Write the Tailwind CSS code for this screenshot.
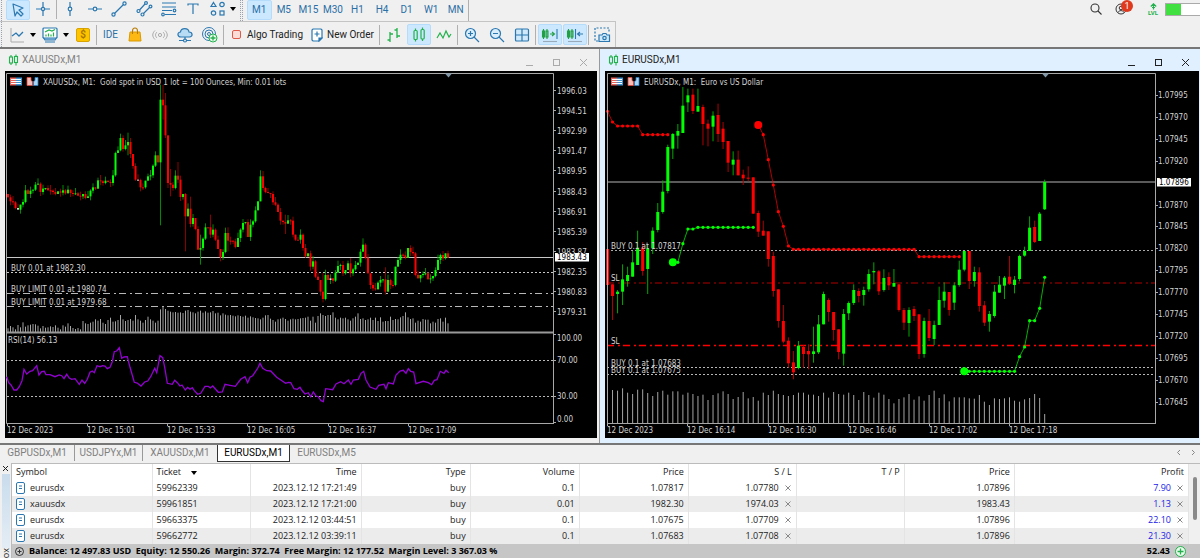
<!DOCTYPE html>
<html lang="en">
<head>
    <meta charset="UTF-8">
    <meta name="viewport" content="width=device-width, initial-scale=1.0">
    <script src="https://cdn.jsdelivr.net/npm/@tailwindcss/browser@4"></script>
    <title>Trading Terminal</title>
</head>
<body class="bg-[#f0f0f0] font-['Open_Sans','Noto_Sans',sans-serif] text-[9px] leading-4 text-[#222]">
<div class="flex min-h-screen w-full flex-col overflow-hidden">

    <!-- toolbars -->
    <header class="flex justify-between border-b-2 border-[#777] font-[Roboto,sans-serif]">
        <div>
            <div class="flex h-[22px] w-[616px] items-start border-b border-[#c4c4c4]">
                <div class="ml-px mr-1 h-[21px] border-l border-dotted border-gray-400"></div>
                <button aria-label="Cursor" class="flex h-5 w-6 items-center justify-center rounded-[2px] border border-[#b5dcfb] bg-[#cce8ff]">
                    <svg class="size-[18px]" viewBox="0 0 18 18" fill="none" stroke="#2b78b0" stroke-width="1.2" stroke-linejoin="round"><path d="M4 3l10 4-4 2 4 4-2 2-4-4-2 4z"/></svg>
                </button>
                <button aria-label="Crosshair" class="flex h-[18px] w-[25px] items-center justify-center">
                    <svg class="size-[18px]" viewBox="0 0 18 18" fill="none" stroke="#2b78b0" stroke-width="1.2"><path d="M9 2v5M9 11v5M2 9h5M11 9h5"/><circle cx="9" cy="9" r="1.6"/></svg>
                </button>
                <div class="ml-px mr-px h-[19px] border-l border-[#b0b0b0]"></div>
                <div class="grid h-[18px] w-[172px] grid-cols-7 justify-items-center">
                    <button aria-label="Vertical line"><svg class="size-[18px]" viewBox="0 0 18 18" fill="none" stroke="#2b78b0" stroke-width="1.2"><path d="M9 2v5M9 11v5"/><circle cx="9" cy="9" r="1.8"/></svg></button>
                    <button aria-label="Horizontal line"><svg class="size-[18px]" viewBox="0 0 18 18" fill="none" stroke="#2b78b0" stroke-width="1.2"><path d="M2 9h5M11 9h5"/><circle cx="9" cy="9" r="1.8"/></svg></button>
                    <button aria-label="Trendline"><svg class="size-[18px]" viewBox="0 0 18 18" fill="none" stroke="#2b78b0" stroke-width="1.2"><path d="M4.500 13.500l9-9"/><circle cx="3.500" cy="14.500" r="1.600"/><circle cx="14.500" cy="3.500" r="1.600"/></svg></button>
                    <button aria-label="Channel"><svg class="size-[18px]" viewBox="0 0 18 18" fill="none" stroke="#2b78b0" stroke-width="1.2"><path d="M4.500 10l5.500-6M8.500 13.500l6-6"/><circle cx="3.500" cy="11" r="1.500"/><circle cx="7.500" cy="14.500" r="1.500"/><circle cx="11" cy="3" r="1.400"/><circle cx="15.500" cy="6.500" r="1.400"/></svg></button>
                    <button aria-label="Fibonacci"><svg class="size-[18px]" viewBox="0 0 18 18" fill="none" stroke="#2b78b0" stroke-width="1.2"><path d="M2 3h14M2 7h14M2 10.500h10M5 14.500h11"/><circle cx="3" cy="14.500" r="1.300"/><circle cx="14.500" cy="10.500" r="1.300"/></svg></button>
                    <button aria-label="Text"><svg class="size-[18px]" viewBox="0 0 18 18" fill="none" stroke="#2b78b0" stroke-width="1.200"><path d="M4 5.500V4h10v1.500M9 4v10"/></svg></button>
                    <button aria-label="Shapes"><svg class="size-[18px]" viewBox="0 0 18 18" fill="none" stroke="#2b78b0" stroke-width="1.200"><path d="M4.500 2.500l2.500 4H2z"/><circle cx="13" cy="4.500" r="2.200"/><circle cx="4.500" cy="13" r="2.200"/><rect x="11" y="11" width="4" height="4"/></svg></button>
                </div>
                <svg class="mt-[7px] h-1 w-[6px]" viewBox="0 0 6 4"><path d="M0 0h6L3 4z"/></svg>
                <div class="ml-1 mr-1 flex h-[21px] w-[3px] border-x border-dotted border-gray-400"></div>
                <div class="grid h-5 w-[221px] grid-cols-9 text-center text-[10px] leading-5 text-[#2b6fa5]">
                    <button class="rounded-[2px] border border-[#b5dcfb] bg-[#cce8ff] leading-[18px]">M1</button>
                    <button>M5</button>
                    <button>M15</button>
                    <button>M30</button>
                    <button>H1</button>
                    <button>H4</button>
                    <button>D1</button>
                    <button>W1</button>
                    <button>MN</button>
                </div>
                <div class="h-[21px] border-l border-[#b0b0b0]"></div>
            </div>

            <div class="flex h-[25px] w-[616px] items-center border-r border-[#c4c4c4] text-[10px]">
                <div class="ml-px h-full border-l border-dotted border-gray-400"></div>
                <button aria-label="Chart type" class="ml-[6px] flex items-center gap-1">
                    <svg class="size-[18px]" viewBox="0 0 18 18" fill="none"><path d="M3 2v14h13" stroke="#aaa"/><path d="M4 10l4-3 3 3 4-4" stroke="#2b78b0" stroke-width="1.300"/></svg>
                    <svg class="h-1 w-[6px]" viewBox="0 0 6 4"><path d="M0 0h6L3 4z"/></svg>
                </button>
                <button aria-label="Template" class="ml-[5px] flex items-center gap-1">
                    <svg class="size-[18px]" viewBox="0 0 18 18" fill="#fff" stroke="#2b78b0" stroke-width="1.200"><path d="M4 16h10M2 11l2 3h10l2-3" fill="#9cc8ea"/><rect x="2" y="2" width="14" height="10" rx="1"/><path d="M4 6l4-2 3 1 3-1.500" fill="none" stroke="#22b14c"/><path d="M5 10.500v-2M7.500 10.500v-3M10 10.500v-2M12.500 10.500v-4" stroke="#22b14c"/></svg>
                    <svg class="h-1 w-[6px]" viewBox="0 0 6 4"><path d="M0 0h6L3 4z"/></svg>
                </button>
                <button aria-label="Market" class="ml-[7px] flex size-[14px] items-center justify-center rounded-[2px] border border-[#d9a300] bg-[#fdc400] font-semibold leading-none text-[#a87400]">$</button>
                <div class="ml-[6px] mr-px h-5 border-l border-[#b0b0b0]"></div>
                <div class="grid w-[124px] grid-cols-5 place-items-center text-[#2b6fa5]">
                    <button>IDE</button>
                    <button aria-label="Shop"><svg class="size-[18px]" viewBox="0 0 18 18"><path d="M4 6h10l1 9H3z" fill="#fdb813" stroke="#d99a00"/><path d="M6.500 8V5c0-4 5-4 5 0v3" fill="none" stroke="#b97c00" stroke-width="1.100"/></svg></button>
                    <button aria-label="Signals"><svg class="size-[18px]" viewBox="0 0 18 18" fill="none" stroke="#aaa"><circle cx="9" cy="9" r="1.600"/><path d="M6 6c-2 2-2 4 0 6M12 6c2 2 2 4 0 6M4 4.500c-3 3-3 6 0 9M14 4.500c3 3 3 6 0 9"/></svg></button>
                    <button aria-label="VPS"><svg class="size-[18px]" viewBox="0 0 18 18" fill="none" stroke="#2b78b0" stroke-width="1.200"><path d="M5 11c-4 0-4-5-.5-5 .5-4.500 8-4.500 8.500 0 4 0 4 5 .5 5z" fill="#b9dcf5"/><path d="M9 11v3M3 14.500h4M11 14.500h4"/><circle cx="9" cy="14.500" r="1.500"/></svg></button>
                    <button aria-label="Copy trading"><svg class="size-[18px]" viewBox="0 0 18 18" fill="none" stroke="#2b78b0"><circle cx="8" cy="8" r="6.500"/><circle cx="8" cy="8" r="4"/><circle cx="8" cy="8" r="1.500"/><circle cx="12" cy="12" r="4" fill="#e9f9ec" stroke="#22b14c"/><path d="M12 9.500v5M9.500 12h5" stroke="#22b14c" stroke-width="1.300"/></svg></button>
                </div>
                <div class="ml-px h-5 border-l border-[#b0b0b0]"></div>
                <button class="ml-2 flex h-6 w-[71px] items-center gap-[6px] whitespace-nowrap">
                    <span class="size-[9px] shrink-0 rounded-[2px] border border-[#e05a4a] bg-[#fbdcd7]"></span>Algo Trading
                </button>
                <button class="ml-2 flex h-6 w-[67px] items-center gap-1 whitespace-nowrap">
                    <svg class="h-[14px] w-3 shrink-0" viewBox="0 0 12 14" fill="#fff" stroke="#2b78b0" stroke-width="1.200"><path d="M2 1h8l1 1v8l-3 3H2l-1-1V2z"/><path d="M8 13v-3h3z" fill="#2b78b0"/><path d="M6 3.500v5M3.500 6h5"/></svg>New Order
                </button>
                <div class="ml-px h-5 border-l border-[#b0b0b0]"></div>
                <div class="ml-px grid w-[75px] grid-cols-3 place-items-center">
                    <button aria-label="Bars"><svg class="size-[18px]" viewBox="0 0 18 18" fill="none" stroke="#22b14c" stroke-width="1.300"><path d="M5 6v10M2.500 14H5M5 8h3M12 2v10M9.500 4H12M12 10h3"/></svg></button>
                    <button aria-label="Candles" class="flex h-[21px] w-6 items-center justify-center rounded-[2px] border border-[#b5dcfb] bg-[#cce8ff]"><svg class="size-[18px]" viewBox="0 0 18 18" fill="none" stroke="#22b14c" stroke-width="1.200"><path d="M5.500 2.500v2M5.500 13.500v2M12.500 1.500v2M12.500 13v2"/><rect x="4" y="4.500" width="3.200" height="9" rx="1"/><rect x="11" y="3.500" width="3.200" height="9.500" rx="1"/></svg></button>
                    <button aria-label="Line"><svg class="size-[18px]" viewBox="0 0 18 18" fill="none" stroke="#22b14c" stroke-width="1.200"><path d="M2 12l3-5 3 5 3-7 3 6 2-3"/></svg></button>
                </div>
                <div class="ml-px h-5 border-l border-[#b0b0b0]"></div>
                <div class="ml-[2px] grid w-[74px] grid-cols-3 place-items-center">
                    <button aria-label="Zoom in"><svg class="size-[18px]" viewBox="0 0 18 18" fill="none" stroke="#2b78b0" stroke-width="1.200"><circle cx="7.500" cy="7.500" r="5" fill="#d9edfb"/><path d="M11 11l5 5M7.500 5v5M5 7.500h5"/></svg></button>
                    <button aria-label="Zoom out"><svg class="size-[18px]" viewBox="0 0 18 18" fill="none" stroke="#2b78b0" stroke-width="1.200"><circle cx="7.500" cy="7.500" r="5" fill="#d9edfb"/><path d="M11 11l5 5M5 7.500h5"/></svg></button>
                    <button aria-label="Tile windows"><svg class="size-[18px]" viewBox="0 0 18 18" fill="#cfe8fa" stroke="#2b78b0" stroke-width="1.200"><rect x="2.500" y="3" width="13" height="12" rx="1"/><path d="M9 3v12M2.500 9h13"/></svg></button>
                </div>
                <div class="ml-px mr-[2px] h-5 border-l border-[#b0b0b0]"></div>
                <div class="flex gap-px">
                    <button aria-label="Shift end" class="flex h-[21px] w-6 items-center justify-center rounded-[2px] border border-[#b5dcfb] bg-[#cce8ff]"><svg class="size-[18px]" viewBox="0 0 18 18" fill="none" stroke="#22a045" stroke-width="1.100"><path d="M2.500 3v10M6 3v10M9 8h4M11 6l2.500 2L11 10"/><rect x="1.500" y="5" width="2" height="6"/><rect x="5" y="5" width="2" height="6"/><path d="M16 3v10" stroke="#2b78b0"/><path d="M2 15.500h14" stroke="#9ab"/></svg></button>
                    <button aria-label="Auto scroll" class="flex h-[21px] w-6 items-center justify-center rounded-[2px] border border-[#b5dcfb] bg-[#cce8ff]"><svg class="size-[18px]" viewBox="0 0 18 18" fill="none" stroke="#22a045" stroke-width="1.100"><path d="M2.500 3v10M6 3v10"/><rect x="1.500" y="5" width="2" height="6"/><rect x="5" y="5" width="2" height="6"/><path d="M9.500 3v10M12 8h5M14 6l-2.500 2 2.500 2" stroke="#2b78b0"/><path d="M2 15.500h14" stroke="#9ab"/></svg></button>
                </div>
                <div class="ml-px mr-1 h-5 border-l border-[#b0b0b0]"></div>
                <button aria-label="Screenshot"><svg class="size-[18px]" viewBox="0 0 18 18" fill="none" stroke="#2b78b0" stroke-width="1.200"><path d="M5 15H2V2h14v5" stroke-dasharray="2 1.500"/><path d="M6 9h3l1-1.500h3L14 9h2.500v6.500H6z" fill="#cfe8fa"/><circle cx="11.500" cy="12" r="1.700"/></svg></button>
            </div>
        </div>

        <div class="flex h-[22px] items-start pt-[3px]">
            <button aria-label="Search"><svg class="h-3 w-3" viewBox="0 0 12 12" fill="none" stroke="#333" stroke-width="1.100"><circle cx="5" cy="5" r="4"/><path d="M8 8l3.500 3.500"/></svg></button>
            <button aria-label="Notifications" class="relative ml-[13px]">
                <svg class="size-3" viewBox="0 0 12 12" fill="none" stroke="#333"><circle cx="6" cy="6" r="5"/><circle cx="6" cy="5" r="1.800"/><path d="M3 9.500c1-2.500 5-2.500 6 0"/></svg>
                <span class="absolute -top-[3px] left-[6px] flex size-3 items-center justify-center rounded-full bg-[#e03a1e] text-[9px] leading-none text-white">1</span>
            </button>
            <div class="ml-5 flex w-3 flex-col items-center text-[#22b14c]">
                <svg class="h-[7px] w-[7px]" viewBox="0 0 7 7" fill="none" stroke="currentColor" stroke-width="1.200"><path d="M3.500 6.500v-5M.8 3.500L3.500.8l2.700 2.700M2 4.500h3"/></svg>
                <span class="text-[6px] font-bold leading-[6px]">LVL</span>
            </div>
            <div class="ml-[6px] flex h-[13px] w-[35px] border border-r-0 border-[#aaa] bg-white"><div class="w-[15px] bg-[#3fe03f]"></div></div>
        </div>
    </header>

    <!-- chart windows -->
    <main class="flex">
        <section class="w-1/2 border-r border-[#999] bg-[#f0f0f0] pb-[5px] pl-[5px] pr-[2px]">
            <div class="flex h-[22px] items-center font-[Roboto,sans-serif] text-[10px] text-[#808080]">
                <svg class="mx-[3px] h-3 w-[11px]" viewBox="0 0 11 12" fill="none" stroke="#22b14c" stroke-width="1.100"><path d="M3 1v2M3 9v2M8 .500v2M8 8.500v3"/><rect x="1.500" y="3" width="3" height="6"/><rect x="6.500" y="2.500" width="3" height="6"/></svg>
                <h2>XAUUSDx,M1</h2>
                <div class="ml-auto mr-[9px] flex gap-[18px] pt-1">
                    <button aria-label="Minimize"><svg class="size-[9px]" viewBox="0 0 9 9" stroke="#aaa"><path d="M1 7.500h7"/></svg></button>
                    <button aria-label="Maximize"><svg class="size-[9px]" viewBox="0 0 9 9" fill="none" stroke="#aaa"><rect x="1.500" y="1.500" width="6" height="6"/></svg></button>
                    <button aria-label="Close"><svg class="size-[9px]" viewBox="0 0 9 9" stroke="#aaa"><path d="M1 1l7 7M8 1L1 8"/></svg></button>
                </div>
            </div>
            <svg id="chart-xau" class="h-auto w-full bg-black font-['DejaVu_Sans_Condensed','DejaVu_Sans',sans-serif] text-[8px]" viewBox="5 71 592 367" fill="#d4d4d4"></svg>
        </section>
        <section class="w-1/2 bg-[#e1f0fe] pb-[5px] pl-[5px] pr-px">
            <div class="flex h-[22px] items-center font-[Roboto,sans-serif] text-[10px] text-[#222]">
                <svg class="mx-[3px] h-3 w-[11px]" viewBox="0 0 11 12" fill="none" stroke="#22b14c" stroke-width="1.100"><path d="M3 1v2M3 9v2M8 .500v2M8 8.500v3"/><rect x="1.500" y="3" width="3" height="6"/><rect x="6.500" y="2.500" width="3" height="6"/></svg>
                <h2>EURUSDx,M1</h2>
                <div class="ml-auto mr-[9px] flex gap-[18px] pt-1">
                    <button aria-label="Minimize"><svg class="size-[9px]" viewBox="0 0 9 9" stroke="#222"><path d="M1 7.500h7"/></svg></button>
                    <button aria-label="Maximize"><svg class="size-[9px]" viewBox="0 0 9 9" fill="none" stroke="#222"><rect x="1.500" y="1.500" width="6" height="6"/></svg></button>
                    <button aria-label="Close"><svg class="size-[9px]" viewBox="0 0 9 9" stroke="#222"><path d="M1 1l7 7M8 1L1 8"/></svg></button>
                </div>
            </div>
            <svg id="chart-eur" class="h-auto w-full bg-black font-['DejaVu_Sans_Condensed','DejaVu_Sans',sans-serif] text-[8px]" viewBox="605 71 594 367" fill="#d4d4d4"></svg>
        </section>
    </main>

    <!-- chart tabs -->
    <nav class="flex h-5 items-start border-t-2 border-[#777] font-[Roboto,sans-serif] text-[10px] text-[#808080]">
        <button class="w-[75px] border-r border-[#999]">GBPUSDx,M1</button>
        <button class="w-[68px] border-r border-[#999]">USDJPYx,M1</button>
        <button class="w-[74px]">XAUUSDx,M1</button>
        <button class="h-[17px] w-[73px] border border-t-0 border-[#333] bg-white text-black">EURUSDx,M1</button>
        <button class="w-[73px]">EURUSDx,M5</button>
        <div class="ml-auto mr-1 flex gap-[10px] pt-1">
            <button aria-label="Previous tab"><svg class="h-[7px] w-[5px]" viewBox="0 0 5 7" fill="none" stroke="#888"><path d="M4 1L1.500 3.500 4 6"/></svg></button>
            <button aria-label="Next tab"><svg class="h-[7px] w-[5px]" viewBox="0 0 5 7" fill="none" stroke="#888"><path d="M1 1l2.500 2.500L1 6"/></svg></button>
        </div>
    </nav>

    <!-- toolbox -->
    <div class="flex flex-1">
        <aside class="flex w-[11px] shrink-0 flex-col items-center">
            <button aria-label="Close toolbox" class="flex h-[11px] items-center"><svg class="size-[5px]" viewBox="0 0 5 5" stroke="#222"><path d="M0 0l5 5M5 0L0 5"/></svg></button>
            <div class="w-2 flex-1 bg-linear-to-b from-[#c9dcec] to-[#e4edf5]"></div>
            <span class="rotate-180 leading-[10px] [writing-mode:vertical-rl]">ox</span>
        </aside>
        <div class="flex min-w-0 flex-1 flex-col border-l border-t border-[#bbb] bg-white">
            <div class="flex">
                <table class="w-full table-fixed border-collapse text-right">
                    <colgroup>
                        <col class="w-[140px]"><col class="w-[98px]"><col class="w-[111px]"><col class="w-[109px]"><col class="w-[109px]">
                        <col class="w-[109px]"><col class="w-[108px]"><col class="w-[108px]"><col class="w-[110px]"><col class="w-[174px]">
                    </colgroup>
                    <thead>
                        <tr class="h-4 *:border-r *:border-[#e4e4e4] *:px-1 *:py-0 *:font-normal">
                            <th class="text-left">Symbol</th>
                            <th class="text-left">Ticket <span class="ml-2 inline-block border-x-3 border-t-4 border-x-transparent border-t-black align-middle"></span></th>
                            <th>Time</th><th>Type</th><th>Volume</th><th>Price</th><th>S / L</th><th>T / P</th><th>Price</th><th>Profit</th>
                        </tr>
                    </thead>
                    <tbody id="positions"></tbody>
                </table>
                <div class="flex w-[11px] shrink-0 justify-center bg-[#f0f0f0] pt-[13px]"><div class="h-[43px] w-1 rounded-full bg-[#8a8a8a]"></div></div>
            </div>
            <div class="flex min-h-[14px] flex-1 items-center gap-[5px] whitespace-pre bg-[#c6c6c6] pl-[3px] pr-[14px] font-bold leading-[14px] text-black">
                <svg class="size-[9px]" viewBox="0 0 9 9" fill="none" stroke="#333"><circle cx="4.500" cy="4.500" r="4"/><path d="M4.500 2.500v4M2.500 4.500h4"/></svg>
                <span>Balance: 12 497.83 USD  Equity: 12 550.26  Margin: 372.74  Free Margin: 12 177.52  Margin Level: 3 367.03 %</span>
                <span class="ml-auto">52.43</span>
                <svg class="size-[11px]" viewBox="0 0 11 11"><circle cx="5.500" cy="5.500" r="5" fill="#e9f9ec" stroke="#22b14c"/><path d="M5.500 2.500v6M2.500 5.500h6" stroke="#22b14c" stroke-width="1.300"/></svg>
            </div>
        </div>
    </div>
</div>

<script>
const GREEN = '#00ff00';
const RED = '#ff0000';

// every series below is stored in thirds of a pixel, measured from the top of its pane
const third = (v, top) => top + v / 3;

const text = (x, y, s) => `<text x="${x}" y="${y}" xml:space="preserve">${s}</text>`;
const hline = (x1, x2, y, color, dash = '', w = 1) => `<path d="M${x1} ${y}H${x2}" stroke="${color}" stroke-dasharray="${dash}" stroke-width="${w}"/>`;

const candle = (x, high, top, bottom, low, body, wick, w) =>
    `<path d="M${x} ${high}V${low}" stroke="${wick}"/>
     <rect x="${x - w / 2}" y="${top}" width="${w}" height="${Math.max(bottom - top, 1)}" fill="${body}"/>`;

const volumes = (tops, x0, step, top, base, w) => tops.map((v, i) =>
    `<rect x="${x0 + i * step - w / 2}" y="${third(v, top)}" width="${w}" height="${base - third(v, top)}" fill="#a4a4a4"/>`).join('');

// small list and trade buttons in the chart corner
const cornerIcons = (x) => `
    <rect x="${x}" y="77.500" width="6" height="8" fill="#e8645a"/><rect x="${x + 6}" y="77.500" width="6" height="8" fill="#3d94d1"/>
    <path d="M${x + 1} 79.500h10M${x + 1} 81.500h10M${x + 1} 83.500h10" stroke="#fff"/>
    <path d="M${x + 17} 77.500h4v3l1.500 1v4H${x + 17}z" fill="#f6c0ba" stroke="#d94a3d" stroke-width=".8"/>
    <path d="M${x + 28} 77.500h-3v3l-1.500 1v4h4.500z" fill="#a9d4f3" stroke="#2f7fc0" stroke-width=".8"/>`;

const priceTag = (x, y, w, s) => `<rect x="${x}" y="${y - 4}" width="${w}" height="8.500" fill="#fff"/><text x="${x + 2}" y="${y + 3}" fill="#000">${s}</text>`;

// ---------- XAUUSDx ----------
const xauClose = [388,400,403,420,425,410,402,367,378,368,365,350,347,372,362,360,367,368,372,378,370,374,367,376,365,375,377,376,383,385,
    378,390,385,368,358,362,337,340,345,338,342,345,322,255,247,210,243,232,222,258,294,335,336,358,358,338,325,322,293,262,
    283,95,112,202,345,350,360,323,335,387,378,445,422,468,450,483,545,540,512,478,478,500,485,515,543,568,552,495,518,518,
    520,537,510,485,465,462,507,470,460,427,400,325,360,372,375,378,403,410,432,458,462,467,457,458,500,515,515,500,540,565,
    556,596,580,626,636,671,693,621,636,631,638,614,594,591,616,606,586,616,604,591,584,551,530,570,616,651,661,664,644,636,
    634,671,636,651,651,596,576,560,562,570,540,552,556,621,631,621,618,616,634,631,624,606,576,561,571,556,569];
// [high, low] of the spikes
const xauSpikes = { 45: [197, 250], 48: [194, 262], 61: [50, 472], 62: [50, 155], 63: [75, 210], 64: [205, 360], 65: [303, 385], 68: [282, 345],
    71: [375, 550], 73: [386, 478], 77: [500, 590], 81: [440, 510], 88: [478, 550], 101: [307, 400], 111: [440, 498], 126: [615, 703], 142: [511, 552], 151: [598, 680] };
const xauVolume = [235,228,232,238,225,232,217,230,226,224,222,223,227,235,228,233,232,229,231,226,233,238,226,230,220,228,234,237,234,238,
    213,220,222,218,215,208,212,207,218,222,210,203,215,214,210,195,208,213,210,207,212,195,208,212,218,210,200,208,212,218,
    212,178,168,177,182,185,187,186,188,187,189,182,180,185,187,190,185,182,188,184,188,187,183,190,188,196,190,194,196,195,
    197,199,196,198,200,197,203,199,202,204,205,208,203,196,195,206,210,215,208,206,203,207,212,208,206,208,207,205,204,203,
    200,212,200,218,198,190,195,198,195,195,187,203,208,203,205,203,208,212,205,200,190,207,205,210,208,203,210,203,213,202,
    215,213,213,200,210,207,208,202,198,187,202,207,205,218,212,215,207,209,209,220,215,218,207,205,215,203,220];
const rsi = [20,380,26,398,33,405,42,420,50,420,58,410,66,392,72,358,80,372,90,364,98,362,110,347,117,375,125,365,133,364,138,374,150,374,
    165,380,178,375,185,377,192,386,200,373,208,384,215,388,225,386,238,403,246,390,254,400,262,388,270,367,277,363,283,368,291,347,300,350,
    308,347,315,348,322,356,330,352,337,335,343,305,350,303,358,293,365,325,372,321,382,320,390,352,403,397,412,399,423,408,434,396,443,393,
    452,380,464,355,470,368,480,317,488,323,494,352,502,400,517,403,524,391,532,398,540,408,546,405,556,420,563,412,570,418,577,413,583,422,
    593,433,602,430,615,409,625,409,631,414,638,408,655,427,667,426,675,403,690,406,706,409,722,388,735,380,743,398,750,382,758,377,773,355,
    780,340,788,355,800,362,812,363,830,382,857,400,865,397,872,398,882,416,892,418,900,412,905,420,915,432,925,428,932,440,940,426,948,438,
    955,440,963,452,970,455,977,416,998,419,1008,402,1022,395,1032,401,1045,390,1053,403,1060,390,1075,388,1083,370,1091,364,1098,390,
    1110,411,1128,418,1136,406,1152,403,1158,416,1165,398,1180,402,1188,375,1200,363,1210,361,1218,370,1225,356,1232,364,1241,366,1248,401,
    1270,394,1285,398,1295,404,1303,391,1311,389,1321,364,1332,370,1338,361,1346,368];

function drawXau() {
    let out = '';
    out += hline(7, 553, 257.5, '#c8c8c8');
    out += hline(7, 553, 272.5, '#c8c8c8', '2 2');
    out += hline(7, 553, 293.5, '#b8b8b8', '7 4 2 3');
    out += hline(7, 553, 306.5, '#b8b8b8', '7 4 2 3');
    out += volumes(xauVolume, 8, 2.5, 250, 332, 1);

    xauClose.forEach((close, i) => {
        const open = i ? xauClose[i - 1] : 378;
        const up = close < open;
        const top = Math.min(open, close), bottom = Math.max(open, close);
        const [high, low] = xauSpikes[i] || [top - (i * 7 % 5) * 4, bottom + (i * 11 % 4) * 4];
        const body = i === 4 || i === 52 || i === 129 ? '#ddd' : up ? GREEN : RED;
        out += candle(8 + i * 2.5, third(high, 68), third(top, 68), third(bottom, 68), third(low, 68), body, up ? '#008a00' : '#8a0000', 2);
    });

    // frame, sub-window split and RSI
    out += '<path d="M6.500 423.500V73.500H553.500V423.500M6.500 423.500H554" fill="none" stroke="#a8a8a8"/>';
    out += '<path d="M6.500 332.500H553.500" stroke="#999" stroke-width="2"/>';
    out += hline(7, 553, 360.5, '#b8b8b8', '2 2') + hline(7, 553, 396.5, '#b8b8b8', '2 2');
    let d = '';
    for (let i = 0; i < rsi.length; i += 2) d += `${i ? 'L' : 'M'}${(rsi[i] / 3).toFixed(1)} ${third(rsi[i + 1], 250).toFixed(1)}`;
    out += `<path d="${d}" fill="none" stroke="#9400d3" stroke-width="1.300"/>`;

    ['1996.03', '1994.51', '1992.99', '1991.47', '1989.95', '1988.43', '1986.91', '1985.39', '1983.87', '1982.35', '1980.83', '1979.31'].forEach((s, i) => {
        const y = Math.round(91 + i * 20.1);
        out += hline(553, 556, y - .5, '#a8a8a8') + text(557, y + 3, s);
    });
    [['100.00', 338], ['70.00', 360], ['30.00', 396], ['0.00', 419]].forEach(([s, y]) => { out += text(557, y + 3, s); });
    out += hline(553, 556, 334.5, '#a8a8a8') + hline(553, 556, 360.5, '#a8a8a8') + hline(553, 556, 396.5, '#a8a8a8') + hline(553, 556, 422.5, '#a8a8a8');
    out += priceTag(555, 257, 34, '1983.43');
    ['12 Dec 2023', '12 Dec 15:01', '12 Dec 15:33', '12 Dec 16:05', '12 Dec 16:37', '12 Dec 17:09'].forEach((s, i) => {
        const x = Math.round(6.5 + i * 80.3);
        out += `<path d="M${x + .5} 423v3" stroke="#a8a8a8"/>` + text(x, 433, s);
    });
    out += text(11, 271, 'BUY 0.01 at 1982.30') + text(11, 292, 'BUY LIMIT 0.01 at 1980.74') + text(11, 305, 'BUY LIMIT 0.01 at 1979.68');
    out += text(8, 343, 'RSI(14) 56.13');
    out += '<path d="M445 73.500h7l-3.500 4z" fill="#8097a8"/>';
    out += cornerIcons(10) + text(43, 85, 'XAUUSDx, M1:  Gold spot in USD 1 lot = 100 Ounces, Min: 0.01 lots');
    document.querySelector('#chart-xau').innerHTML = out;
}

// ---------- EURUSDx ----------
// high, body top, body bottom, low, 1 = rising
const eurCandles = [
    [541,543,651,651,0],[649,649,684,756,0],[666,671,678,736,1],[589,634,671,711,1],[596,621,639,656,1],[549,583,626,626,1],[488,539,591,591,1],[522,539,609,623,0],
    [530,541,603,678,1],[478,488,541,558,1],[405,432,486,493,1],[337,371,432,437,1],[230,237,369,376,1],[195,198,242,273,1],[168,189,203,242,1],[57,113,195,195,1],
    [62,82,103,132,1],[62,80,129,138,0],[62,114,131,131,1],[110,117,168,232,0],[155,167,182,235,0],[130,143,176,220,1],[107,141,198,222,0],[162,182,222,243,0],
    [219,219,284,312,0],[250,275,290,322,1],[248,275,322,322,0],[305,320,331,351,0],[295,329,332,340,0],[328,328,437,437,0],[428,435,491,507,0],[458,488,503,503,0],
    [490,490,573,596,0],[551,564,669,686,0],[664,664,759,779,0],[711,759,821,826,0],[808,818,886,899,0],[849,883,913,934,0],[819,833,900,904,1],[831,837,858,899,0],
    [829,849,859,904,0],[776,850,858,884,1],[741,769,853,858,1],[671,678,769,769,1],[691,696,732,761,0],[732,732,786,818,0],[784,784,852,874,0],[723,738,857,893,1],
    [700,705,736,756,1],[649,666,705,711,1],[661,669,684,703,0],[656,666,681,713,1],[604,618,664,671,1],[583,609,613,649,1],[606,610,670,681,0],[604,630,666,671,1],
    [613,627,652,666,0],[603,645,656,656,1],[649,649,726,731,0],[720,726,764,786,0],[718,726,765,806,1],[714,723,744,759,0],[739,739,858,873,0],[749,759,858,869,1],
    [723,759,810,819,0],[758,771,813,831,1],[656,696,771,771,1],[643,671,698,719,1],[672,672,726,743,0],[643,652,704,726,1],[578,605,651,656,1],[549,549,605,610,1],
    [549,549,639,663,0],[596,612,639,656,1],[598,613,714,731,0],[699,712,764,774,0],[729,738,761,791,1],[651,671,744,749,1],[624,650,674,674,1],[624,629,653,693,1],
    [564,626,647,651,0],[624,635,651,676,1],[560,564,633,640,1],[536,549,563,566,1],[445,479,549,549,1],[458,477,522,525,0],[432,437,519,519,1],[335,342,424,426,1]];
const eurVolume = [435,437,430,443,447,434,433,444,453,441,437,449,439,439,449,443,447,453,449,465,450,445,439,447,462,456,441,460,456,
    467,443,450,437,447,450,453,450,443,443,449,449,453,443,458,441,447,449,443,450,465,441,450,458,443,449,462,475,462,
    457,447,464,454,467,450,437,459,448,469,457,457,457,460,461,450,470,480,460,462,460,457,467,470,463,459,447,459,507];
// stop levels: first bar, color, big first dot, values
const fill = (n, v) => Array(n).fill(v);
const stops = [
    [0, RED, false, [130, 162, ...fill(5, 174), ...fill(6, 200)]],
    [13, GREEN, true, [583, 583, 527, 483, 483, ...fill(12, 478)]],
    [30, RED, true, [171, 200, 275, 351, 431, 475, 534, ...fill(25, 544), ...fill(9, 566)]],
    [71, GREEN, true, [...fill(11, 910), 866, 837, 758, 758, 721, 628]],
];

function drawEur() {
    const barX = (i) => 607.5 + i * 5.025;
    let out = '';
    out += hline(607, 1155, 182, '#b4b4b4');
    out += hline(607, 1155, 250.5, '#a8a8a8', '2 2');
    out += hline(607, 1155, 283, '#b00000', '7 4 2 3');
    out += hline(607, 1155, 345.5, RED, '7 4 2 3', 1.5);
    out += hline(607, 1155, 367.5, '#b8b8b8', '2 2') + hline(607, 1155, 374.5, '#b8b8b8', '2 2');
    out += volumes(eurVolume, barX(1), 5.025, 245, 423, 1);

    eurCandles.forEach(([high, top, bottom, low, up], i) => {
        out += candle(barX(i), third(high, 68), third(top, 68), third(bottom, 68), third(low, 68), up ? GREEN : RED, up ? '#00a800' : '#b00000', 3);
    });
    stops.forEach(([first, color, big, values]) => {
        const pts = values.map((v, i) => [barX(first + i), third(v, 68)]);
        out += `<polyline points="${pts.join(' ')}" fill="none" stroke="${color}" stroke-opacity=".7"/>`;
        pts.forEach(([x, y], i) => { out += `<circle cx="${x}" cy="${y}" r="${big && i === 0 ? 4 : 1.6}" fill="${color}"/>`; });
    });

    out += '<path d="M607.500 423.500V73.500H1155.500V423.500M607.500 423.500H1156" fill="none" stroke="#a8a8a8"/>';
    ['1.07995', '1.07970', '1.07945', '1.07920', '', '1.07870', '1.07845', '1.07820', '1.07795', '1.07770', '1.07745', '1.07720', '1.07695', '1.07670', '1.07645'].forEach((s, i) => {
        const y = Math.round(95 + i * 21.9);
        if (s) out += hline(1155, 1158, y + .5, '#a8a8a8') + text(1158, y + 3, s);
    });
    out += priceTag(1157, 182, 34, '1.07896');
    ['12 Dec 2023', '12 Dec 16:14', '12 Dec 16:30', '12 Dec 16:46', '12 Dec 17:02', '12 Dec 17:18'].forEach((s, i) => {
        const x = Math.round(607 + i * 80.4);
        out += `<path d="M${x + .5} 423v3" stroke="#a8a8a8"/>` + text(x, 433, s);
    });
    out += text(611, 249, 'BUY 0.1 at 1.07817') + text(611, 281, 'SL') + text(611, 344, 'SL');
    out += text(611, 366, 'BUY 0.1 at 1.07683') + text(611, 373, 'BUY 0.1 at 1.07675');
    out += '<path d="M1042 73.500h7l-3.500 4z" fill="#8097a8"/>';
    out += cornerIcons(611) + text(644, 85, 'EURUSDx, M1:  Euro vs US Dollar');
    document.querySelector('#chart-eur').innerHTML = out;
}

// ---------- open positions ----------
const positions = [
    ['eurusdx', '59962339', '2023.12.12 17:21:49', '0.1', '1.07817', '1.07780', '1.07896', '7.90'],
    ['xauusdx', '59961851', '2023.12.12 17:21:00', '0.01', '1982.30', '1974.03', '1983.43', '1.13'],
    ['eurusdx', '59663375', '2023.12.12 03:44:51', '0.1', '1.07675', '1.07709', '1.07896', '22.10'],
    ['eurusdx', '59662772', '2023.12.12 03:39:11', '0.1', '1.07683', '1.07708', '1.07896', '21.30'],
];
const cross = (label) => `<button aria-label="${label}" class="ml-[6px] mr-px"><svg class="size-[6px]" viewBox="0 0 6 6" stroke="#888"><path d="M.5 .5l5 5M5.500 .5l-5 5"/></svg></button>`;

document.querySelector('#positions').innerHTML = positions.map(([symbol, ticket, time, volume, open, sl, price, profit]) => `
    <tr class="h-4 even:bg-[#ececec] *:border-r *:border-[#e4e4e4] *:px-1 *:py-0">
        <td><div class="flex items-center gap-[5px]">
            <svg class="h-3 w-[9px]" viewBox="0 0 9 12" fill="#fff" stroke="#2b78b0"><rect x=".5" y=".5" width="8" height="11" rx="1.500"/><path d="M3 4h3M3 6.500h3"/></svg>${symbol}
        </div></td>
        <td class="text-left">${ticket}</td><td>${time}</td><td>buy</td><td>${volume}</td><td>${open}</td>
        <td>${sl}${cross('Remove stop loss')}</td><td></td><td>${price}</td>
        <td><span class="text-[#1a1ae6]">${profit}</span>${cross('Close position')}</td>
    </tr>`).join('');

drawXau();
drawEur();
</script>
</body>
</html>
